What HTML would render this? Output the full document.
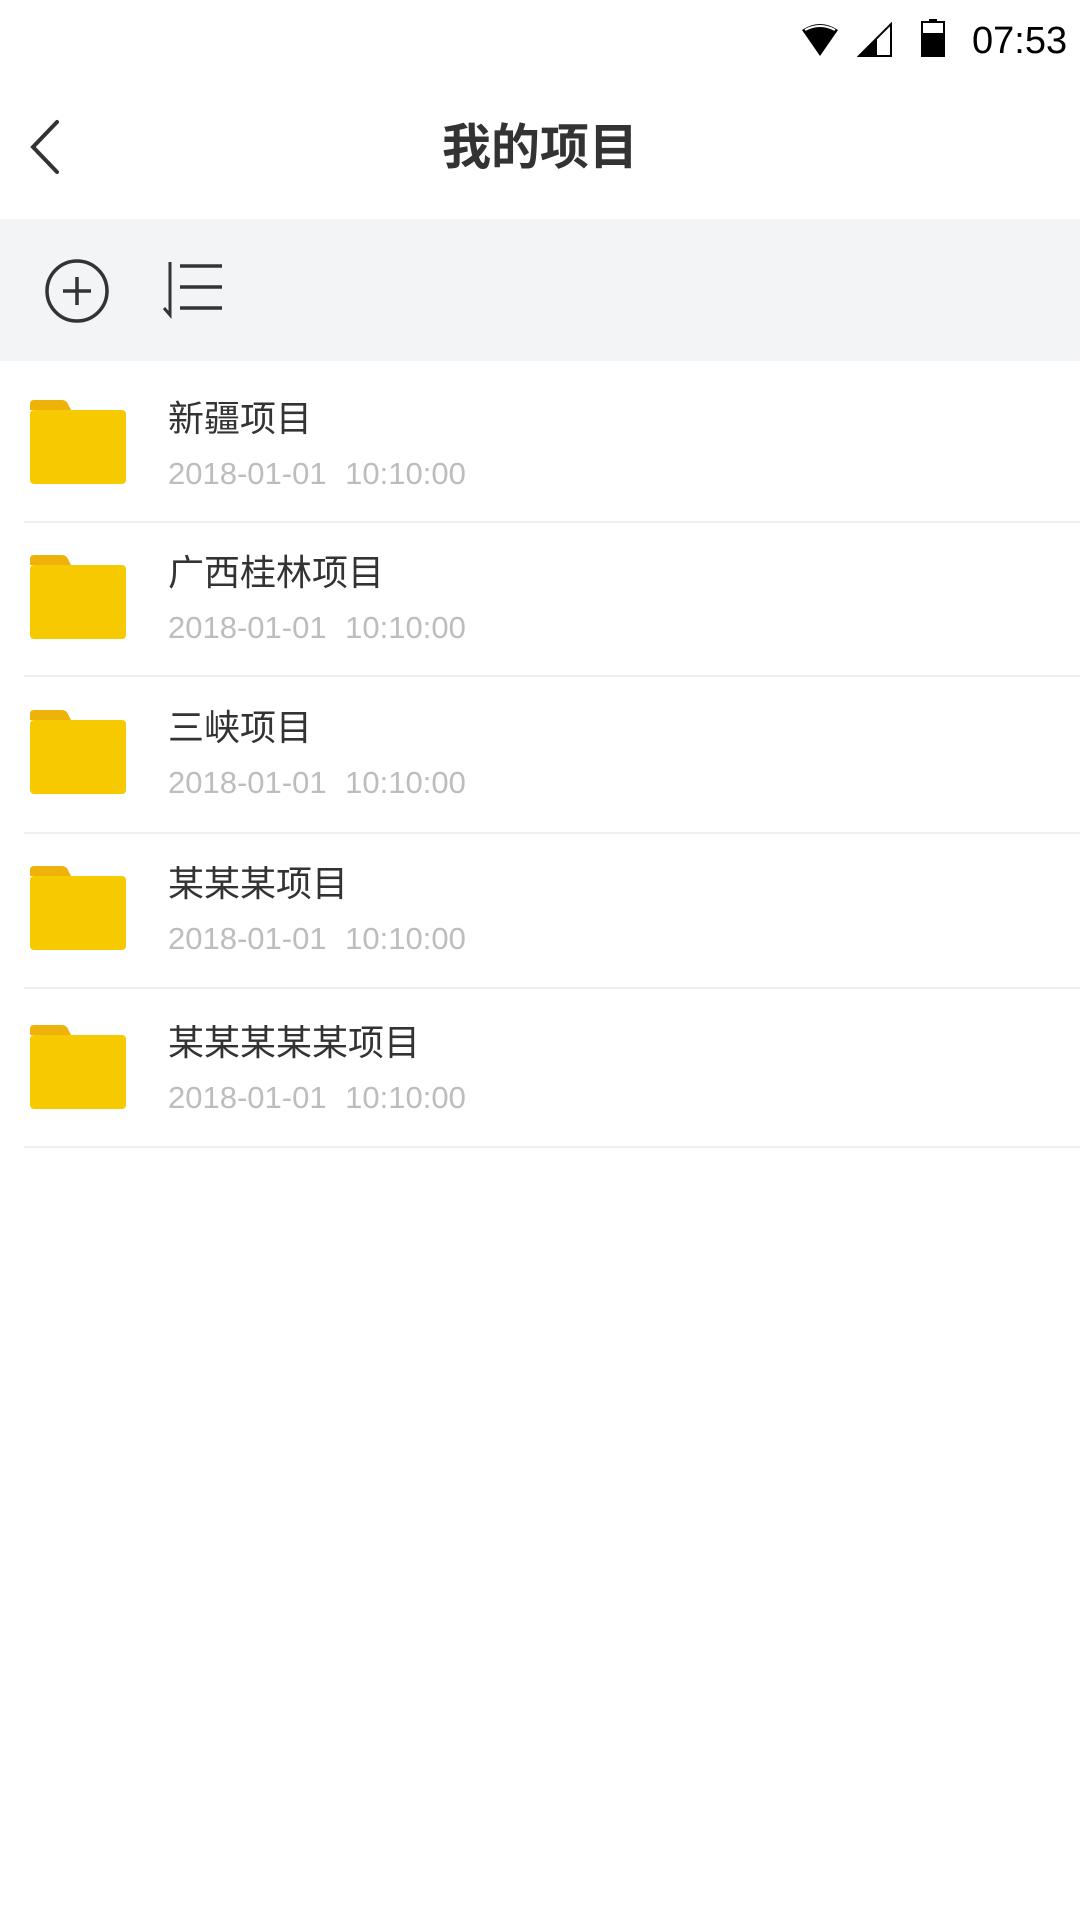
<!DOCTYPE html>
<html><head><meta charset="utf-8"><style>
*{margin:0;padding:0;box-sizing:border-box}
body{width:1080px;height:1920px;background:#fff;position:relative;overflow:hidden;font-family:"Liberation Sans","Noto Sans CJK SC",sans-serif}
.abs{position:absolute}
.t{position:absolute;left:168px;font-size:36px;color:#333;line-height:1;white-space:nowrap}
.d{position:absolute;left:168px;font-size:31px;color:#bdbdbd;line-height:1;white-space:nowrap;word-spacing:10px}
.sep{position:absolute;left:24px;right:0;height:2px;background:#efefef}
</style></head><body>
<svg class="abs" style="left:800px;top:22px" width="40" height="36" viewBox="0 0 40 36">
<path d="M2 8 Q20 -4 38 8 L20 34 Z" fill="#000"/><path d="M5 8 Q20 0 35 8" fill="none" stroke="#fff" stroke-width="2"/></svg>
<svg class="abs" style="left:857px;top:22px" width="36" height="36" viewBox="0 0 36 36">
<path d="M34 2 L34 34 L2 34 Z" fill="none" stroke="#000" stroke-width="2"/><path d="M20 16 L20 34 L2 34 Z" fill="#000"/></svg>
<svg class="abs" style="left:921px;top:19px" width="24" height="38" viewBox="0 0 24 38">
<rect x="8" y="0" width="8" height="4" fill="#000"/><rect x="1" y="3" width="22" height="34" fill="none" stroke="#000" stroke-width="2"/><rect x="1" y="14" width="22" height="23" fill="#000"/></svg>
<div class="abs" style="left:972px;top:19px;font-size:38px;color:#000;line-height:44px">07:53</div>
<svg class="abs" style="left:26px;top:118px" width="40" height="58" viewBox="0 0 40 58">
<path d="M31 4 L7 29 L31 54" fill="none" stroke="#333" stroke-width="4" stroke-linecap="round"/></svg>
<div class="abs" style="left:0;width:1080px;top:118px;text-align:center;font-size:49px;font-weight:bold;color:#333;line-height:60px">我的项目</div>
<div class="abs" style="left:0;top:219px;width:1080px;height:142px;background:#f3f4f6"></div>
<svg class="abs" style="left:44px;top:258px" width="66" height="66" viewBox="0 0 66 66">
<circle cx="33" cy="33" r="30" fill="none" stroke="#333" stroke-width="3.5"/><path d="M33 19 V47 M19 33 H47" stroke="#333" stroke-width="3.5"/></svg>
<svg class="abs" style="left:162px;top:260px" width="62" height="60" viewBox="0 0 62 60">
<path d="M8 2 V55 L2 48" fill="none" stroke="#333" stroke-width="3"/><path d="M18 6 H60 M18 27 H60 M18 48 H60" stroke="#333" stroke-width="3.5"/></svg>
<svg width="0" height="0" style="position:absolute"><defs>
<symbol id="f" viewBox="0 0 96 84"><path d="M4 0 H32 Q36 0 38 4 L41 10 H0 V4 Q0 0 4 0Z" fill="#efb20b"/><rect x="0" y="10" width="96" height="74" rx="4" fill="#f7c900"/></symbol></defs></svg>

<svg class="abs" style="left:30px;top:400px" width="96" height="84"><use href="#f"/></svg>
<div class="t" style="top:401px">新疆项目</div><div class="d" style="top:458px">2018-01-01 10:10:00</div>
<div class="sep" style="top:521px"></div>

<svg class="abs" style="left:30px;top:555px" width="96" height="84"><use href="#f"/></svg>
<div class="t" style="top:555px">广西桂林项目</div><div class="d" style="top:612px">2018-01-01 10:10:00</div>
<div class="sep" style="top:675px"></div>

<svg class="abs" style="left:30px;top:710px" width="96" height="84"><use href="#f"/></svg>
<div class="t" style="top:710px">三峡项目</div><div class="d" style="top:767px">2018-01-01 10:10:00</div>
<div class="sep" style="top:832px"></div>

<svg class="abs" style="left:30px;top:866px" width="96" height="84"><use href="#f"/></svg>
<div class="t" style="top:866px">某某某项目</div><div class="d" style="top:923px">2018-01-01 10:10:00</div>
<div class="sep" style="top:987px"></div>

<svg class="abs" style="left:30px;top:1025px" width="96" height="84"><use href="#f"/></svg>
<div class="t" style="top:1025px">某某某某某项目</div><div class="d" style="top:1082px">2018-01-01 10:10:00</div>
<div class="sep" style="top:1146px"></div>
</body></html>
